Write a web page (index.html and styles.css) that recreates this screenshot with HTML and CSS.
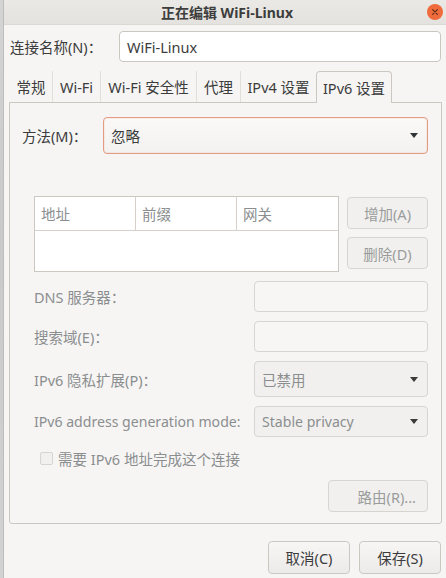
FILE: index.html
```html
<!DOCTYPE html>
<html lang="zh-CN">
<head>
<meta charset="utf-8">
<link rel="stylesheet" href="styles.css">
</head>
<body>
<div class="screen">
  <div class="behind"></div>
  <div class="dialog">
    <div class="titlebar">
      <span></span>
      <span class="title">正在编辑 WiFi-Linux</span>
      <span class="close"><svg width="16" height="16" viewBox="0 0 16 16"><circle cx="8" cy="8" r="8" fill="#ef6b3c"/><path d="M5.6 5.6 L10.4 10.4 M10.4 5.6 L5.6 10.4" stroke="#5a2a18" stroke-width="1.1" stroke-linecap="round"/></svg></span>
    </div>
    <div class="body">
      <div class="name-row">
        <span class="label">连接名称(N)：</span>
        <div class="entry name-entry">WiFi-Linux</div>
      </div>
      <div class="tabs">
        <div class="tab t1">常规</div>
        <div class="tab t2">Wi-Fi</div>
        <div class="tab t3">Wi-Fi 安全性</div>
        <div class="tab t4">代理</div>
        <div class="tab t5">IPv4 设置</div>
        <div class="tab t6 active">IPv6 设置</div>
      </div>
      <div class="panel">
        <div class="method-row">
          <span class="label">方法(M)：</span>
          <div class="combo focused"><span>忽略</span><span class="arrow"></span></div>
        </div>
        <div class="addr-block">
          <div class="table">
            <div class="thead">
              <div class="th">地址</div>
              <div class="th">前缀</div>
              <div class="th">网关</div>
            </div>
          </div>
          <div class="side-buttons">
            <div class="btn disabled">增加(A)</div>
            <div class="btn disabled">删除(D)</div>
          </div>
        </div>
        <div class="form">
          <span class="label dim">DNS 服务器：</span>
          <div class="entry disabled-entry"></div>
          <span class="label dim">搜索域(E)：</span>
          <div class="entry disabled-entry"></div>
          <span class="label dim">IPv6 隐私扩展(P)：</span>
          <div class="combo disabled-combo tall"><span>已禁用</span><span class="arrow"></span></div>
          <span class="label dim latin">IPv6 address generation mode:</span>
          <div class="combo disabled-combo short"><span class="latin">Stable privacy</span><span class="arrow"></span></div>
        </div>
        <div class="check-row">
          <span class="checkbox"></span>
          <span class="label dim">需要 IPv6 地址完成这个连接</span>
        </div>
        <div class="routes-row">
          <div class="btn disabled routes">路由(R)...</div>
        </div>
      </div>
      <div class="actions">
        <div class="btn action">取消(C)</div>
        <div class="btn action">保存(S)</div>
      </div>
    </div>
  </div>
</div>
</body>
</html>
```

FILE: styles.css
```css
* { box-sizing: border-box; }
html, body {
  margin: 0;
  padding: 0;
  width: 446px;
  height: 578px;
  overflow: hidden;
}
body {
  font-family: "Noto Sans", "Noto Sans CJK SC", sans-serif;
  font-size: 14.5px;
  color: #3c3c3c;
  background: #f6f5f4;
}
.latin { font-size: 14.1px; }
.screen {
  display: flex;
  height: 578px;
}
.behind {
  width: 4px;
  flex: none;
  background: linear-gradient(#d4d4d4, #c9c9c9 40%, #d2d2d2);
  border-right: 1px solid #bdbdbd;
}
.dialog {
  flex: 1;
  display: flex;
  flex-direction: column;
  background: #f6f5f4;
}
.titlebar {
  height: 25px;
  display: grid;
  grid-template-columns: 40px 1fr 40px;
  align-items: center;
  background: linear-gradient(#ebe9e5, #e4e2de);
  border-bottom: 1px solid #dcd9d4;
}
.title {
  text-align: center;
  font-weight: bold;
  font-size: 14px;
  color: #3d3d3d;
  padding-left: 4px;
}
.close {
  display: flex;
  justify-content: flex-end;
  padding-right: 3px;
}
.close svg { display: block; }
.body {
  padding: 6px 4px 0 5px;
  display: flex;
  flex-direction: column;
}
.name-row {
  display: flex;
  align-items: center;
  padding-left: 1px;
}
.name-row .label { width: 109px; }
.entry {
  height: 31px;
  border: 1px solid #cdc7c2;
  border-radius: 4px;
  background: #ffffff;
  display: flex;
  align-items: center;
  padding: 0 7px;
}
.name-entry {
  flex: 1;
  margin-right: 1px;
}
.tabs {
  display: flex;
  margin-top: 9px;
  padding-left: 1px;
  height: 32px;
  position: relative;
  z-index: 1;
}
.tab {
  height: 31px;
  display: flex;
  align-items: center;
  justify-content: center;
  color: #3c3c3c;
  border-right: 1px solid #e2dfdb;
  white-space: nowrap;
}
.t1 { width: 43px; }
.t2 { width: 48px; }
.t3 { width: 96px; }
.t4 { width: 44px; }
.t5 { width: 75px; border-right: none; }
.t6 { width: 76px; }
.tab.active {
  height: 32px;
  border: 1px solid #cdc7c2;
  border-bottom: none;
  border-radius: 4px 4px 0 0;
  background: #f6f5f4;
}
.panel {
  margin-top: -1px;
  height: 422px;
  border: 1px solid #cdc7c2;
  border-radius: 0 0 3px 3px;
  background: #f6f5f4;
  display: flex;
  flex-direction: column;
}
.method-row {
  display: flex;
  align-items: center;
  margin-top: 14px;
  padding: 0 13px 0 12px;
}
.method-row .label { width: 81px; }
.combo {
  flex: 1;
  height: 36px;
  border: 1px solid #cdc7c2;
  border-radius: 4px;
  display: flex;
  align-items: center;
  justify-content: space-between;
  padding: 0 8px 0 7px;
}
.combo.focused {
  height: 37px;
  border-color: #e39c83;
  background: linear-gradient(#faf9f8, #f3f2f0);
  box-shadow: inset 0 0 0 1px rgba(233, 84, 32, 0.08);
}
.arrow {
  width: 0;
  height: 0;
  border-left: 4.5px solid transparent;
  border-right: 4.5px solid transparent;
  border-top: 5px solid #2e3436;
  margin-right: 1px;
}
.addr-block {
  display: flex;
  gap: 8px;
  margin-top: 42px;
  padding: 0 13px 0 24px;
}
.table {
  width: 305px;
  height: 76px;
  background: #ffffff;
  border: 1px solid #cdc7c2;
}
.thead {
  display: grid;
  grid-template-columns: 101px 101px 1fr;
  height: 34px;
  border-bottom: 1px solid #d6d1cd;
}
.th {
  color: #8b8e8f;
  display: flex;
  align-items: center;
  padding-left: 6px;
  border-right: 1px solid #d6d1cd;
}
.th:last-child { border-right: none; }
.side-buttons {
  flex: 1;
  display: flex;
  flex-direction: column;
  gap: 8px;
  padding-top: 1px;
}
.btn {
  height: 32px;
  border: 1px solid #cdc7c2;
  border-radius: 4px;
  display: flex;
  align-items: center;
  justify-content: center;
  background: linear-gradient(#f7f6f5, #edebe9);
}
.btn.disabled {
  color: #9a9c9c;
  background: #f1f0ee;
  border-color: #d8d4d0;
}
.form {
  display: grid;
  grid-template-columns: 1fr 174px;
  row-gap: 9px;
  align-items: center;
  margin-top: 9px;
  padding: 0 13px 0 24px;
}
.label { white-space: nowrap; }
.dim { color: #8b8e8f; }
.disabled-entry {
  background: #f7f6f5;
  border-color: #d8d4d0;
}
.disabled-combo {
  color: #8b8e8f;
  background: #f1f0ee;
  border-color: #d8d4d0;
}
.disabled-combo .arrow { border-top-color: #3a3a3a; }
.combo.tall { height: 36px; }
.combo.short { height: 31px; }
.check-row {
  display: flex;
  align-items: center;
  gap: 5px;
  margin-top: 11px;
  padding-left: 30px;
}
.checkbox {
  width: 13px;
  height: 13px;
  border: 1px solid #d8d4d0;
  border-radius: 2px;
  background: #f1f0ee;
}
.routes-row {
  display: flex;
  justify-content: flex-end;
  margin-top: 11px;
  padding-right: 13px;
}
.routes {
  width: 100px;
  height: 32px;
  justify-content: flex-end;
  padding-right: 11px;
}
.actions {
  display: flex;
  justify-content: flex-end;
  gap: 9px;
  margin-top: 17px;
  padding-right: 1px;
}
.action {
  width: 82px;
  height: 33px;
  color: #3c3c3c;
}
```
